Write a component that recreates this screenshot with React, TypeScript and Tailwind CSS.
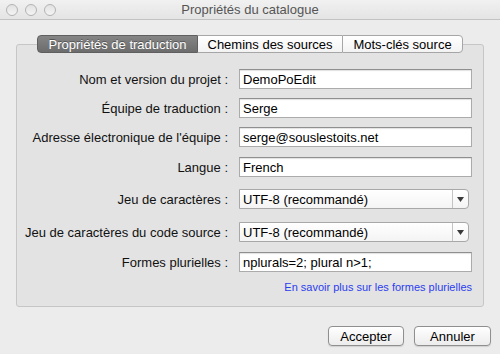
import React from "react";

const font = { fontFamily: '"Liberation Sans", Arial, sans-serif' };

function Row({
  label,
  children,
  mt,
}: {
  label: string;
  children: React.ReactNode;
  mt: string;
}) {
  return (
    <div className={`flex items-center h-[20px] ${mt}`}>
      <div className="w-[211px] text-right text-[13px] text-[#111] leading-none whitespace-nowrap">
        {label}
      </div>
      <div className="ml-[11px] flex">{children}</div>
    </div>
  );
}

function TextField({ value }: { value: string }) {
  return (
    <div className="w-[233px] h-[20px] bg-white border border-[#ababab] border-t-[#8f8f8f] shadow-[inset_0_1px_1px_rgba(0,0,0,0.12)] flex items-center pl-[3px] text-[13px] text-black leading-none whitespace-nowrap">
      {value}
    </div>
  );
}

function SelectField({ value }: { value: string }) {
  return (
    <div className="w-[230px] h-[20px] bg-gradient-to-b from-white to-[#f4f4f4] border border-[#a8a8a8] rounded-r-[4px] flex items-stretch text-[13px] text-black leading-none">
      <div className="flex-1 flex items-center pl-[3px] whitespace-nowrap">
        {value}
      </div>
      <div className="w-[16px] border-l border-[#c4c4c4] flex items-center justify-center">
        <svg width="7" height="5" viewBox="0 0 7 5">
          <path d="M0 0 L7 0 L3.5 5 Z" fill="#3a3a3a" />
        </svg>
      </div>
    </div>
  );
}

export default function App() {
  return (
    <div
      className="w-[500px] h-[354px] bg-[#ececec] flex flex-col overflow-hidden"
      style={font}
    >
      {/* Title bar */}
      <div className="relative h-[20px] flex items-center bg-gradient-to-b from-[#f1f1f1] to-[#e4e4e4] border-b border-[#c2c2c2]">
        <div className="flex items-center gap-[7px] ml-[6px]">
          <div className="w-[12px] h-[12px] rounded-full bg-gradient-to-b from-[#e2e2e2] to-[#f4f4f4] border border-[#b3b3b3]" />
          <div className="w-[12px] h-[12px] rounded-full bg-gradient-to-b from-[#e2e2e2] to-[#f4f4f4] border border-[#b3b3b3]" />
          <div className="w-[12px] h-[12px] rounded-full bg-gradient-to-b from-[#e2e2e2] to-[#f4f4f4] border border-[#b3b3b3]" />
        </div>
        <div className="absolute inset-0 flex items-center justify-center text-[13px] text-[#555] leading-none pointer-events-none">
          Propriétés du catalogue
        </div>
      </div>

      {/* Content */}
      <div className="px-[16px] flex flex-col">
        {/* Tabs */}
        <div className="relative z-10 mt-[15px] flex justify-center">
          <div className="flex h-[18px] text-[13px] leading-none">
            <div className="w-[161px] flex items-center justify-center rounded-l-[4px] bg-gradient-to-b from-[#858585] to-[#6c6c6c] border border-[#5f5f5f] text-white [text-shadow:0_-1px_0_rgba(0,0,0,0.35)]">
              Propriétés de traduction
            </div>
            <div className="w-[144px] flex items-center justify-center bg-gradient-to-b from-white to-[#f3f3f3] border-y border-[#a6a6a6] text-black">
              Chemins des sources
            </div>
            <div className="w-[121px] flex items-center justify-center rounded-r-[4px] bg-gradient-to-b from-white to-[#f3f3f3] border border-[#a6a6a6] text-black">
              Mots-clés source
            </div>
          </div>
        </div>

        {/* Tab box */}
        <div className="-mt-[9px] h-[263px] bg-[#e3e3e3] border border-[#c6c6c6] rounded-[3px] flex flex-col pt-[24px]">
          <Row label="Nom et version du projet :" mt="mt-0">
            <TextField value="DemoPoEdit" />
          </Row>
          <Row label="Équipe de traduction :" mt="mt-[9px]">
            <TextField value="Serge" />
          </Row>
          <Row label="Adresse électronique de l'équipe :" mt="mt-[9px]">
            <TextField value="serge@souslestoits.net" />
          </Row>
          <Row label="Langue :" mt="mt-[10px]">
            <TextField value="French" />
          </Row>
          <Row label="Jeu de caractères :" mt="mt-[12px]">
            <SelectField value="UTF-8 (recommandé)" />
          </Row>
          <Row label="Jeu de caractères du code source :" mt="mt-[13px]">
            <SelectField value="UTF-8 (recommandé)" />
          </Row>
          <Row label="Formes plurielles :" mt="mt-[10px]">
            <TextField value="nplurals=2; plural n>1;" />
          </Row>
          <div className="mt-[9px] flex justify-end pr-[11px]">
            <span className="text-[11px] leading-[13px] text-[#2b3df0] whitespace-nowrap">
              En savoir plus sur les formes plurielles
            </span>
          </div>
        </div>
      </div>

      {/* Buttons */}
      <div className="mt-[19px] flex justify-end gap-[10px] pr-[9px]">
        <button className="w-[76px] h-[20px] rounded-[4px] bg-gradient-to-b from-white to-[#ececec] border border-[#8f8f8f] shadow-[0_1px_1px_rgba(0,0,0,0.12)] text-[13px] leading-none text-black">
          Accepter
        </button>
        <button className="w-[77px] h-[20px] rounded-[4px] bg-gradient-to-b from-white to-[#ececec] border border-[#8f8f8f] shadow-[0_1px_1px_rgba(0,0,0,0.12)] text-[13px] leading-none text-black">
          Annuler
        </button>
      </div>
    </div>
  );
}
